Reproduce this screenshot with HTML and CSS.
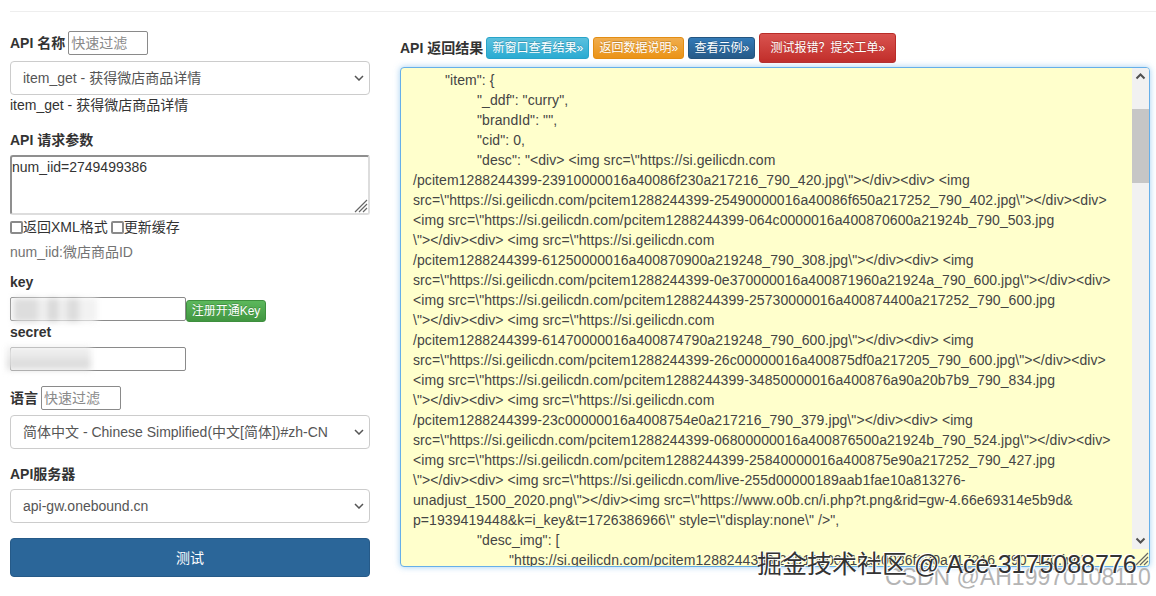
FILE: index.html
```html
<!DOCTYPE html>
<html lang="zh-CN">
<head>
<meta charset="utf-8">
<title>API 测试</title>
<link rel="stylesheet" href="styles.css">
</head>
<body>
<div class="rule"></div>
<main class="layout">
  <form class="left">
    <div class="label-row"><label>API 名称</label><input class="filter" placeholder="快速过滤"></div>
    <select class="picker"><option>item_get - 获得微店商品详情</option></select>
    <div class="api-name">item_get - 获得微店商品详情</div>
    <label class="block params-label">API 请求参数</label>
    <div class="params-wrap">
      <textarea class="params">num_iid=2749499386</textarea>
      <svg class="grip" width="14" height="14" viewBox="0 0 14 14"><path d="M13 1 1 13M13 5 5 13M13 9 9 13" stroke="#666" stroke-width="1.2" fill="none"/></svg>
    </div>
    <div class="checks">
      <input type="checkbox" class="check"><span>返回XML格式</span>
      <input type="checkbox" class="check second"><span>更新缓存</span>
    </div>
    <div class="help">num_iid:微店商品ID</div>
    <label class="block key-label">key</label>
    <div class="key-row">
      <div class="secret-wrap"><input class="cred"><i class="smear smear-key"></i></div>
      <a class="btn green">注册开通Key</a>
    </div>
    <label class="block secret-label">secret</label>
    <div class="secret-wrap fit"><input class="cred"><i class="smear smear-secret"></i></div>
    <div class="label-row lang-row"><label>语言</label><input class="filter" placeholder="快速过滤"></div>
    <select class="picker tight"><option>简体中文 - Chinese Simplified(中文[简体])#zh-CN</option></select>
    <label class="block server-label">API服务器</label>
    <select class="picker tight"><option>api-gw.onebound.cn</option></select>
    <button type="button" class="submit">测试</button>
  </form>
  <section class="right">
    <div class="toolbar">
      <label>API 返回结果</label>
      <a class="btn cyan">新窗口查看结果»</a>
      <a class="btn orange">返回数据说明»</a>
      <a class="btn blue">查看示例»</a>
      <a class="btn red">测试报错？提交工单»</a>
    </div>
    <div class="result">
      <div class="result-text"><div class="i1">"item": {</div>
<div class="i2">"_ddf": "curry",</div>
<div class="i2">"brandId": "",</div>
<div class="i2">"cid": 0,</div>
<div class="i2">"desc": "&lt;div&gt; &lt;img src=\"https://si.geilicdn.com</div>
<div>/pcitem1288244399-23910000016a40086f230a217216_790_420.jpg\"&gt;&lt;/div&gt;&lt;div&gt; &lt;img</div>
<div>src=\"https://si.geilicdn.com/pcitem1288244399-25490000016a40086f650a217252_790_402.jpg\"&gt;&lt;/div&gt;&lt;div&gt;</div>
<div>&lt;img src=\"https://si.geilicdn.com/pcitem1288244399-064c0000016a400870600a21924b_790_503.jpg</div>
<div>\"&gt;&lt;/div&gt;&lt;div&gt; &lt;img src=\"https://si.geilicdn.com</div>
<div>/pcitem1288244399-61250000016a400870900a219248_790_308.jpg\"&gt;&lt;/div&gt;&lt;div&gt; &lt;img</div>
<div>src=\"https://si.geilicdn.com/pcitem1288244399-0e370000016a400871960a21924a_790_600.jpg\"&gt;&lt;/div&gt;&lt;div&gt;</div>
<div>&lt;img src=\"https://si.geilicdn.com/pcitem1288244399-25730000016a400874400a217252_790_600.jpg</div>
<div>\"&gt;&lt;/div&gt;&lt;div&gt; &lt;img src=\"https://si.geilicdn.com</div>
<div>/pcitem1288244399-61470000016a400874790a219248_790_600.jpg\"&gt;&lt;/div&gt;&lt;div&gt; &lt;img</div>
<div>src=\"https://si.geilicdn.com/pcitem1288244399-26c00000016a400875df0a217205_790_600.jpg\"&gt;&lt;/div&gt;&lt;div&gt;</div>
<div>&lt;img src=\"https://si.geilicdn.com/pcitem1288244399-34850000016a400876a90a20b7b9_790_834.jpg</div>
<div>\"&gt;&lt;/div&gt;&lt;div&gt; &lt;img src=\"https://si.geilicdn.com</div>
<div>/pcitem1288244399-23c00000016a4008754e0a217216_790_379.jpg\"&gt;&lt;/div&gt;&lt;div&gt; &lt;img</div>
<div>src=\"https://si.geilicdn.com/pcitem1288244399-06800000016a400876500a21924b_790_524.jpg\"&gt;&lt;/div&gt;&lt;div&gt;</div>
<div>&lt;img src=\"https://si.geilicdn.com/pcitem1288244399-25840000016a400875e90a217252_790_427.jpg</div>
<div>\"&gt;&lt;/div&gt;&lt;div&gt; &lt;img src=\"https://si.geilicdn.com/live-255d00000189aab1fae10a813276-</div>
<div>unadjust_1500_2020.png\"&gt;&lt;/div&gt;&lt;img src=\"https://www.o0b.cn/i.php?t.png&amp;rid=gw-4.66e69314e5b9d&amp;</div>
<div>p=1939419448&amp;k=i_key&amp;t=1726386966\" style=\"display:none\" /&gt;",</div>
<div class="i2">"desc_img": [</div>
<div class="i3">"https://si.geilicdn.com/pcitem1288244399-23910000016a40086f230a217216_790_420.jpg",</div></div>
      <div class="scrollbar">
        <svg class="arrow" width="17" height="17" viewBox="0 0 17 17"><path d="M4.5 10.5 8.5 6.5 12.5 10.5" fill="none" stroke="#505050" stroke-width="2"/></svg>
        <div class="track"><div class="thumb"></div></div>
        <svg class="arrow" width="17" height="17" viewBox="0 0 17 17"><path d="M4.5 6.5 8.5 10.5 12.5 6.5" fill="none" stroke="#505050" stroke-width="2"/></svg>
      </div>
      <svg class="grip" width="14" height="14" viewBox="0 0 14 14"><path d="M13 1 1 13M13 5 5 13M13 9 9 13" stroke="#666" stroke-width="1.2" fill="none"/></svg>
    </div>
  </section>
</main>
<div class="mark mark-csdn">CSDN @AH19970108110</div>
<div class="mark mark-juejin">掘金技术社区 @ Ace-3175088776</div>
</body>
</html>
```
FILE: styles.css
```css
* { box-sizing: border-box; }
html, body { margin: 0; height: 596px; overflow: hidden; background: #fff; }
body { position: relative; font: 14px/20px "Liberation Sans", "Noto Sans CJK SC", sans-serif; color: #333; }
.rule { height: 1px; background: #eee; margin: 11px 0 0 10px; }
.layout { display: flex; gap: 30px; padding: 19px 6px 0 10px; }
.left { width: 360px; flex: none; display: flex; flex-direction: column; align-items: stretch; }
.right { flex: 1; min-width: 0; }
label { font-weight: 700; color: #333; }
.block { display: block; }
.label-row { display: flex; align-items: center; gap: 3px; height: 24px; }
.filter { width: 80px; height: 24px; border: 1px solid #8a8a8a; border-radius: 2px; padding: 1px 2px; font: inherit; color: #333; background: #fff; }
.filter::placeholder { color: #8a8a8a; }
.picker {
  display: block; width: 100%; height: 34px; margin-top: 6px; padding: 6px 24px 6px 12px;
  border: 1px solid #ccc; border-radius: 4px; color: #555; font: inherit;
  appearance: none;
  background: #fff url("data:image/svg+xml,%3Csvg xmlns='http://www.w3.org/2000/svg' width='10' height='6'%3E%3Cpath d='M1 1l4 4 4-4' fill='none' stroke='%23555' stroke-width='1.5'/%3E%3C/svg%3E") no-repeat right 5px center;
}
.tight { margin-top: 5px; }
.api-name { height: 20px; color: #333; }
.params-label { margin-top: 15px; }
.params-wrap { position: relative; height: 60px; margin-top: 5px; }
.params { display: block; width: 100%; height: 60px; padding: 0; border: 2px solid #8f8f8f; border-right-color: #ddd; border-bottom-color: #ddd; border-radius: 3px; font: inherit; color: #333; outline: none; resize: none; }
.params-wrap .grip { right: 2px; bottom: 2px; }
.checks { display: flex; align-items: center; height: 20px; margin-top: 2px; color: #333; }
.check { appearance: none; width: 13px; height: 13px; margin: 0; flex: none; border: 2px solid #8a8a8a; border-radius: 2px; background: #fff; }
.second { margin-left: 3px; }
.help { margin-top: 5px; color: #737373; }
.key-label { margin-top: 10px; }
.key-row { display: flex; align-items: flex-end; height: 24px; margin-top: 5px; }
.secret-wrap { position: relative; width: 176px; height: 24px; flex: none; }
.fit { margin-top: 5px; }
.cred { display: block; width: 176px; height: 24px; border: 1px solid #8a8a8a; border-radius: 2px; background: #fff; padding: 1px 2px; }
.smear { position: absolute; display: block; filter: blur(3px); }
.smear-key { left: 3px; top: 1px; width: 84px; height: 24px; background: linear-gradient(90deg, #ddd 0 30%, #efefef 30% 42%, #d8d8d8 42% 54%, #efefef 54% 64%, #dcdcdc 64% 78%, #f2f2f2 78%); }
.smear-secret { left: -3px; top: 0; width: 84px; height: 23px; background: linear-gradient(#ececec 0 50%, #dedede 50%); }
.secret-label { margin-top: 1px; }
.lang-row { margin-top: 15px; }
.server-label { margin-top: 15px; }
.submit { height: 39px; margin-top: 15px; border: 1px solid #265a88; border-radius: 4px; background: #2b6699; color: #fff; font: inherit; }
.btn { display: inline-flex; align-items: center; justify-content: center; height: 22px; border: 1px solid; border-radius: 3px; font-size: 12px; line-height: 16px; color: #fff; white-space: nowrap; text-shadow: 0 -1px 0 rgba(0,0,0,.2); flex: none; }
.green { width: 80px; margin-bottom: -1px; background: linear-gradient(#5cb85c, #419641); border-color: #3e8f3e; }
.cyan { width: 103px; background: linear-gradient(#5bc0de, #2aabd2); border-color: #28a4c9; }
.orange { width: 91px; background: linear-gradient(#f0ad4e, #eb9316); border-color: #e38d13; }
.blue { width: 67px; background: linear-gradient(#337ab7, #265a88); border-color: #245580; }
.red { width: 137px; height: 30px; background: linear-gradient(#d9534f, #c12e2a); border-color: #b92c28; }
.toolbar { display: flex; align-items: center; gap: 4px; height: 30px; margin-top: 2px; }
.toolbar label { margin-right: -1px; }
.result { position: relative; display: flex; height: 500px; margin-top: 4px; border: 1px solid #66afe9; border-radius: 4px; background: #ffffcc; overflow: hidden; box-shadow: 0 0 6px rgba(102,175,233,.6); }
.result-text { flex: 1; min-width: 0; padding: 2px 12px 0; height: 100%; overflow: hidden; color: #444; letter-spacing: .08px; }
.result-text div { white-space: pre; height: 20px; }
.result-text .i1 { padding-left: 32px; }
.result-text .i2 { padding-left: 64px; }
.result-text .i3 { padding-left: 96px; }
.scrollbar { width: 17px; flex: none; display: flex; flex-direction: column; background: #f1f1f1; margin-bottom: 17px; }
.arrow { display: block; flex: none; }
.track { flex: 1; padding-top: 24px; }
.thumb { height: 74px; background: #c6c6c6; }
.grip { position: absolute; right: 0; bottom: 0; }
.mark { position: absolute; white-space: nowrap; pointer-events: none; }
.mark-juejin { left: 757px; top: 550px; font-size: 25px; line-height: 28px; color: #333; text-shadow: 1px 1px 0 #fff, -1px -1px 0 #fff; }
.mark-csdn { left: 885px; top: 565px; font-size: 23px; line-height: 24px; color: #b4b4b4; }
```
